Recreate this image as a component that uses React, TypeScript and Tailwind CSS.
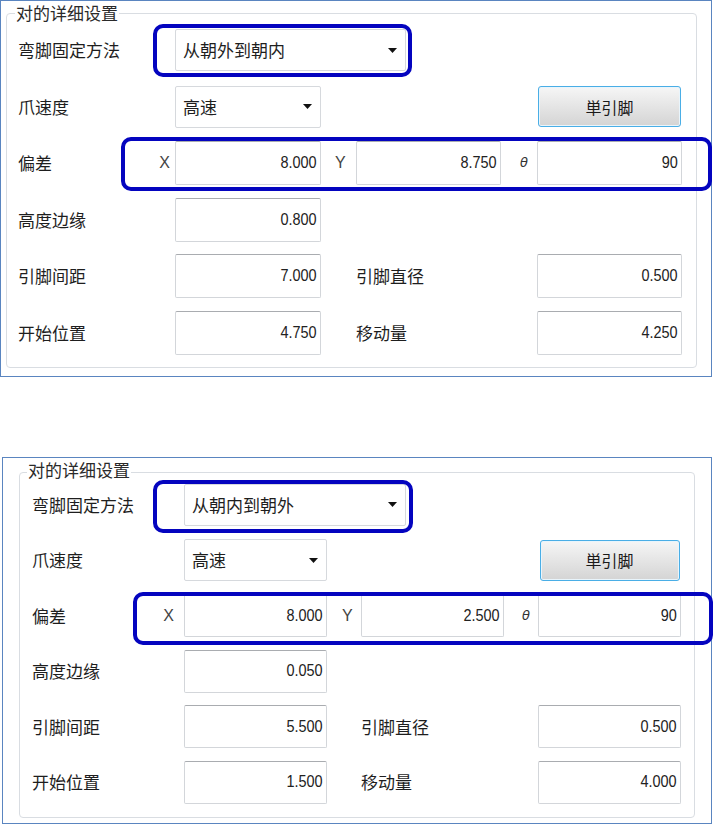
import React from "react";

type Values = {
  method: string;
  speed: string;
  x: string;
  y: string;
  t: string;
  height: string;
  pitch: string;
  dia: string;
  start: string;
  move: string;
};

type Layout = {
  frame: string;
  box: string;
  title: string;
  grid: string;
  combo: string;
  button: string;
  xLabel: string;
  yLabel: string;
  tLabel: string;
};

const top: Values = {
  method: "从朝外到朝内",
  speed: "高速",
  x: "8.000",
  y: "8.750",
  t: "90",
  height: "0.800",
  pitch: "7.000",
  dia: "0.500",
  start: "4.750",
  move: "4.250",
};

const bottom: Values = {
  method: "从朝内到朝外",
  speed: "高速",
  x: "8.000",
  y: "2.500",
  t: "90",
  height: "0.050",
  pitch: "5.500",
  dia: "0.500",
  start: "1.500",
  move: "4.000",
};

const topLayout: Layout = {
  frame: "w-[712px] h-[377px] border border-[#5a85c0]",
  box: "ml-[5px] mt-[12px] w-[691px] h-[355px] rounded-[4px] border border-[#d9dde2]",
  title: "-mt-[10px] ml-[8px]",
  grid: "mt-[6px] pl-[11px] grid grid-cols-[157px_146px_35px_145px_36px_145px] auto-rows-[44px] gap-y-[12.5px]",
  combo: "w-[231px]",
  button: "w-[143px]",
  xLabel: "pr-[5px]",
  yLabel: "pl-[14px]",
  tLabel: "pl-[19px]",
};

const bottomLayout: Layout = {
  frame: "ml-[2px] mt-[80px] w-[710px] h-[367px] border border-[#5a85c0]",
  box: "ml-[16px] mt-[14px] w-[676px] h-[346px] rounded-[4px] border border-[#d9dde2]",
  title: "-mt-[12px] ml-[7px]",
  grid: "mt-[4px] pl-[12px] grid grid-cols-[152px_143px_34px_143px_34px_143px] auto-rows-[43px] gap-y-[12.5px]",
  combo: "w-[222px]",
  button: "w-[140px]",
  xLabel: "pr-[10px]",
  yLabel: "pl-[15px]",
  tLabel: "pl-[18px]",
};

export default function App() {
  return (
    <div className="relative w-[716px] h-[826px] overflow-hidden bg-white font-['Noto_Sans_CJK_SC','Noto_Sans_CJK_JP',sans-serif]">
      <Panel v={top} l={topLayout} />
      <Panel v={bottom} l={bottomLayout} />

      {/* annotation boxes drawn over the screenshot */}
      <div className="absolute left-[153px] top-[24px] w-[259px] h-[53px] rounded-[10px] border-[4px] border-[#0404bf]" />
      <div className="absolute left-[121px] top-[137px] w-[591px] h-[54px] rounded-[10px] border-[4px] border-[#0404bf]" />
      <div className="absolute left-[153px] top-[480px] w-[260px] h-[53px] rounded-[10px] border-[4px] border-[#0404bf]" />
      <div className="absolute left-[133px] top-[592px] w-[580px] h-[53px] rounded-[10px] border-[4px] border-[#0404bf]" />
    </div>
  );
}

function Panel({ v, l }: { v: Values; l: Layout }) {
  return (
    <div className={l.frame}>
      <div className={l.box}>
        <div
          className={`${l.title} w-fit bg-white px-[1px] text-[17px] leading-[18px] text-[#2a2a2a]`}
        >
          对的详细设置
        </div>
        <div className={l.grid}>
          <Label>弯脚固定方法</Label>
          <div className="col-span-5 flex items-center">
            <Combo className={l.combo} value={v.method} />
          </div>

          <Label>爪速度</Label>
          <div className="flex items-center">
            <Combo className="w-full" value={v.speed} />
          </div>
          <div className="col-span-3" />
          <div className="flex items-center justify-center">
            <button
              className={`${l.button} h-[41px] rounded-[3px] border border-[#4aaee6] bg-gradient-to-b from-[#f6f6f6] to-[#d4d4d4] font-['Noto_Sans_CJK_JP',sans-serif] text-[16px] text-[#1a1a1a] shadow-[inset_0_0_0_1px_#e9f5fc]`}
            >
              単引脚
            </button>
          </div>

          <div className="flex items-center justify-between">
            <Label>偏差</Label>
            <span className={`${l.xLabel} font-['Liberation_Sans',sans-serif] text-[16px] text-[#444]`}>
              X
            </span>
          </div>
          <Num value={v.x} />
          <span className={`${l.yLabel} flex items-center font-['Liberation_Sans',sans-serif] text-[16px] text-[#444]`}>
            Y
          </span>
          <Num value={v.y} />
          <span className={`${l.tLabel} flex items-center font-['DejaVu_Sans',sans-serif] text-[13px] italic text-[#333]`}>
            θ
          </span>
          <Num value={v.t} />

          <Label>高度边缘</Label>
          <Num value={v.height} />
          <div className="col-span-4" />

          <Label>引脚间距</Label>
          <Num value={v.pitch} />
          <div />
          <Label className="col-span-2">引脚直径</Label>
          <Num value={v.dia} />

          <Label>开始位置</Label>
          <Num value={v.start} />
          <div />
          <Label className="col-span-2">移动量</Label>
          <Num value={v.move} />
        </div>
      </div>
    </div>
  );
}

function Label({ children, className = "" }: { children: React.ReactNode; className?: string }) {
  return (
    <div className={`flex items-center text-[17px] text-[#1e1e1e] ${className}`}>{children}</div>
  );
}

function Combo({ value, className }: { value: string; className: string }) {
  return (
    <div
      className={`${className} flex h-[42px] items-center justify-between rounded-[2px] border border-[#d6d9dd] bg-white pl-[7px] pr-[8px] text-[17px] text-[#1e1e1e]`}
    >
      <span>{value}</span>
      <svg width="9" height="5" viewBox="0 0 9 5">
        <path d="M0 0h9L4.5 5z" fill="#111" />
      </svg>
    </div>
  );
}

function Num({ value }: { value: string }) {
  return (
    <div className="flex h-full items-center justify-end rounded-[2px] border border-[#d3d6da] border-t-[#a9acb0] bg-white pr-[3px] font-['Liberation_Sans',sans-serif] text-[17px] text-[#222]">
      <span className="inline-block origin-right scale-x-[0.85]">{value}</span>
    </div>
  );
}
